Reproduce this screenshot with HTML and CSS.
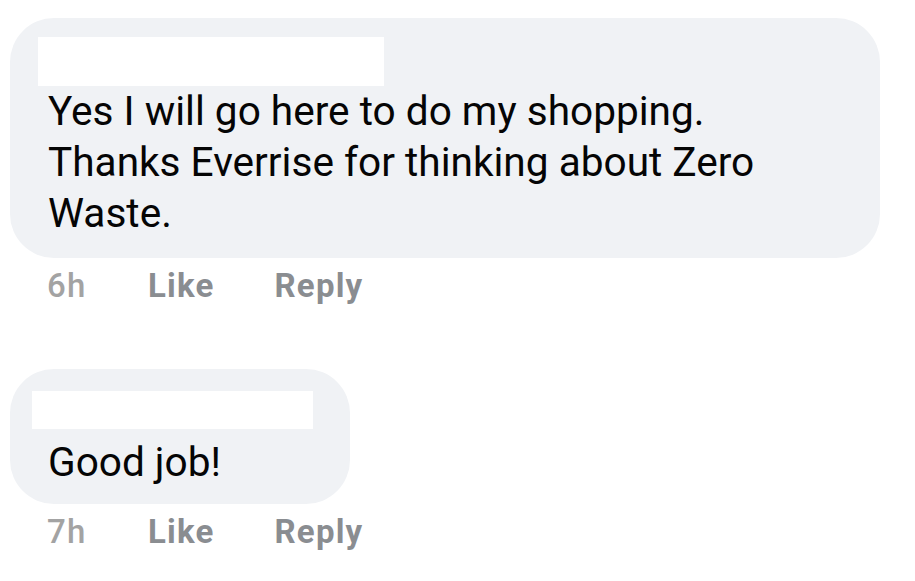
FILE: index.html
```html
<!DOCTYPE html>
<html>
<head>
<meta charset="utf-8">
<link rel="stylesheet" href="styles.css">
</head>
<body>
<div class="thread">
  <div class="comment">
    <div class="bubble bubble-wide">
      <div class="name name-a"></div>
      <p class="text">Yes I will go here to do my shopping.<br>Thanks Everrise for thinking about Zero<br>Waste.</p>
    </div>
    <div class="meta">
      <span class="time">6h</span>
      <span class="action">Like</span>
      <span class="action">Reply</span>
    </div>
  </div>
  <div class="comment comment-second">
    <div class="bubble bubble-narrow">
      <div class="name name-b"></div>
      <p class="text">Good job!</p>
    </div>
    <div class="meta">
      <span class="time">7h</span>
      <span class="action">Like</span>
      <span class="action">Reply</span>
    </div>
  </div>
</div>
</body>
</html>
```

FILE: styles.css
```css
html, body {
  margin: 0;
  padding: 0;
  background: #ffffff;
}
body {
  font-family: Roboto, "Noto Sans", Arial, sans-serif;
  color: #050505;
}
.thread {
  padding: 18px 0 0 10px;
  display: flex;
  flex-direction: column;
}
.comment {
  display: flex;
  flex-direction: column;
  align-items: flex-start;
}
.comment-second {
  margin-top: 63px;
}
.bubble {
  background: #f0f2f5;
  border-radius: 44px;
  box-sizing: border-box;
}
.bubble-wide {
  width: 870px;
  padding: 19px 20px 19px 38px;
}
.bubble-narrow {
  width: 340px;
  padding: 22px 20px 16px 38px;
}
.name {
  background: #ffffff;
}
.name-a {
  width: 346px;
  height: 49px;
  margin-left: -10px;
}
.name-b {
  width: 281px;
  height: 38px;
  margin-left: -16px;
  margin-bottom: 8px;
}
.text {
  margin: 0;
  font-size: 40.6px;
  line-height: 51px;
  font-weight: 400;
  color: #050505;
}
.meta {
  display: flex;
  margin-top: 8px;
  padding-left: 37px;
  font-size: 33px;
  line-height: 40px;
  font-weight: 700;
  letter-spacing: 1.2px;
}
.time {
  color: #a3a3a3;
  font-weight: 500;
  width: 101px;
}
.action {
  color: #8a8d91;
}
.action + .action {
  margin-left: 60px;
}
```
